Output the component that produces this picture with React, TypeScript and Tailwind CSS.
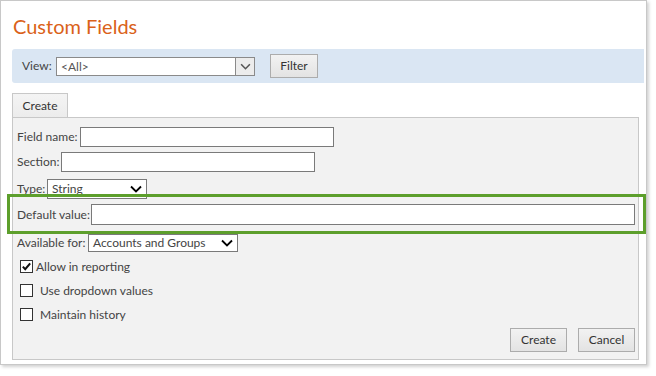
import React from "react";

function Chevron({ className = "" }: { className?: string }) {
  return (
    <svg viewBox="0 0 12 8" className={className} fill="none" stroke="currentColor" strokeWidth={1.8}>
      <path d="M1 1.5l5 5 5-5" />
    </svg>
  );
}

function Label({ children, width }: { children: React.ReactNode; width: string }) {
  return <span className={`shrink-0 whitespace-nowrap ${width}`}>{children}</span>;
}

function Select({ value, width, height }: { value: string; width: string; height: string }) {
  return (
    <div className={`flex items-center justify-between border border-[#7a7a7a] bg-white pl-[4px] pr-[4px] ${width} ${height}`}>
      <span className="whitespace-nowrap leading-none">{value}</span>
      <Chevron className="h-[8px] w-[12px] text-black" />
    </div>
  );
}

function Checkbox({ checked = false, label, gap }: { checked?: boolean; label: string; gap: string }) {
  return (
    <div className="flex h-[13px] items-center pl-[3px]">
      <div className="flex h-[13px] w-[13px] shrink-0 items-center justify-center border border-[#333] bg-white">
        {checked && (
          <svg viewBox="0 0 12 12" className="h-[11px] w-[11px]" fill="none" stroke="#111" strokeWidth={2.2}>
            <path d="M2 6.2l2.6 2.8L10 2.5" />
          </svg>
        )}
      </div>
      <span className={`${gap} whitespace-nowrap leading-none`}>{label}</span>
    </div>
  );
}

function Button({ children, className = "" }: { children: React.ReactNode; className?: string }) {
  return (
    <div
      className={`flex h-[24px] items-center justify-center border border-[#acacac] bg-gradient-to-b from-[#f2f2f2] to-[#e3e3e3] text-[#333] ${className}`}
    >
      {children}
    </div>
  );
}

export default function App() {
  return (
    <div className="h-[376px] w-[656px] bg-white font-['Lato',sans-serif] text-[12px] text-[#444]">
      <div className="relative flex h-[365px] w-[647px] flex-col border border-[#c8c8c8] pl-[11px] pr-[2px] shadow-[2px_2px_3px_rgba(0,0,0,0.18)]">
        {/* Title */}
        <div className="pt-[13px] pl-[1px] text-[20px] leading-[24px] text-[#da6219]">Custom Fields</div>

        {/* View filter bar */}
        <div className="mt-[11px] flex h-[34px] items-center rounded-l-[3px] bg-[#dae6f3] pl-[10px]">
          <Label width="w-[34px]">View:</Label>
          <div className="flex h-[19px] w-[199px] border border-[#8a8a8a] bg-white">
            <span className="flex-1 pl-[4px] leading-[17px] text-[#555]">&lt;All&gt;</span>
            <div className="flex w-[19px] items-center justify-center border-l border-[#8a8a8a] bg-[#ececec]">
              <Chevron className="h-[7px] w-[11px] text-[#555]" />
            </div>
          </div>
          <Button className="ml-[15px] w-[48px]">Filter</Button>
        </div>

        {/* Tab */}
        <div className="mt-[10px] flex h-[24px] w-[56px] items-center justify-center border border-b-0 border-[#c8c8c8] bg-gradient-to-b from-[#f4f4f4] to-[#ececec] text-[#333]">
          Create
        </div>

        {/* Form panel */}
        <div className="mr-[5px] flex h-[243px] flex-col border border-[#c8c8c8] bg-[#f2f2f2] pl-[4px] pr-[3px]">
          <div className="mt-[9px] flex h-[20px] items-center">
            <Label width="w-[63px]">Field name:</Label>
            <div className="h-[20px] w-[254px] border border-[#7a7a7a] bg-white" />
          </div>
          <div className="mt-[5px] flex h-[20px] items-center">
            <Label width="w-[44px]">Section:</Label>
            <div className="h-[20px] w-[254px] border border-[#7a7a7a] bg-white" />
          </div>
          <div className="mt-[7px] flex h-[20px] items-center">
            <Label width="w-[30px]">Type:</Label>
            <Select value="String" width="w-[100px]" height="h-[20px]" />
          </div>
          <div className="mt-[5px] flex h-[21px] items-center">
            <Label width="w-[74px]">Default value:</Label>
            <div className="h-[21px] flex-1 border border-[#7a7a7a] bg-white" />
          </div>
          <div className="mt-[9px] flex h-[18px] items-center">
            <Label width="w-[71px]">Available for:</Label>
            <Select value="Accounts and Groups" width="w-[150px]" height="h-[18px]" />
          </div>
          <div className="mt-[8px]">
            <Checkbox checked label="Allow in reporting" gap="ml-[3px]" />
          </div>
          <div className="mt-[11px]">
            <Checkbox label="Use dropdown values" gap="ml-[7px]" />
          </div>
          <div className="mt-[11px]">
            <Checkbox label="Maintain history" gap="ml-[7px]" />
          </div>
          <div className="mt-[7px] flex justify-end gap-[11px]">
            <Button className="w-[57px]">Create</Button>
            <Button className="w-[57px]">Cancel</Button>
          </div>
        </div>

        {/* Highlight annotation */}
        <div className="absolute left-[6px] top-[193px] h-[40px] w-[639px] border-[3px] border-[#5d9f2c]" />
      </div>
    </div>
  );
}
